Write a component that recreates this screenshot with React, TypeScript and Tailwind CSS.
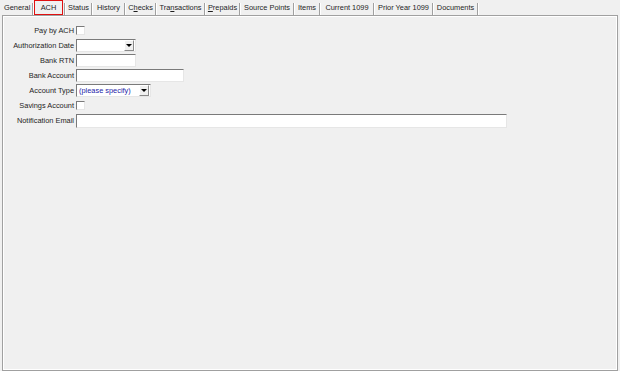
import { ReactNode } from "react";

type Tab = { label: ReactNode; cls: string; active?: boolean };

const tabs: Tab[] = [
	{ label: "General", cls: "w-[32px] justify-start pl-[4px]" },
	{ label: "ACH", cls: "w-[30px]", active: true },
	{ label: "Status", cls: "w-[25px] justify-center" },
	{ label: "History", cls: "w-[31px] justify-center" },
	{
		label: (
			<>
				C<span className="underline">h</span>ecks
			</>
		),
		cls: "w-[29px] justify-center",
	},
	{
		label: (
			<>
				Tra<span className="underline">n</span>sactions
			</>
		),
		cls: "w-[47px] justify-center",
	},
	{
		label: (
			<>
				<span className="underline">P</span>repaids
			</>
		),
		cls: "w-[33px] justify-center",
	},
	{ label: "Source Points", cls: "w-[52px] justify-center" },
	{ label: "Items", cls: "w-[24px] justify-center" },
	{ label: "Current 1099", cls: "w-[52px] justify-center" },
	{ label: "Prior Year 1099", cls: "w-[57px] justify-center" },
	{ label: "Documents", cls: "w-[43px] justify-center" },
];

const sunken =
	"border border-t-[#7a7a7a] border-l-[#7a7a7a] border-b-[#e6e6e6] border-r-[#e6e6e6] bg-white";

const Separator = () => (
	<div className="mt-[3px] h-[12px] w-[2px] border-l border-r border-l-[#a0a0a0] border-r-white" />
);

const Arrow = () => (
	<div className="flex h-[11px] w-[10px] items-center justify-center border border-t-white border-l-white border-b-[#8a8a8a] border-r-[#8a8a8a] bg-[#f0f0f0]">
		<div className="h-0 w-0 border-x-[3px] border-t-[3px] border-x-transparent border-t-black" />
	</div>
);

const Row = ({ label, children }: { label: string; children: ReactNode }) => (
	<div className="flex h-[15px] items-center">
		<div className="w-[71px] whitespace-nowrap text-right">{label}</div>
		<div className="ml-[2px] flex items-center">{children}</div>
	</div>
);

const Check = () => <div className={`h-[9px] w-[9px] ${sunken}`} />;

export default function App() {
	return (
		<div className="h-[371px] w-[620px] overflow-hidden bg-[#f0f0f0] font-['Liberation_Sans',Arial,sans-serif] text-[7.4px] leading-none text-[#1e1e1e]">
			<div className="flex h-[15px]">
				{tabs.map((t, i) => (
					<div key={i} className="flex">
						{t.active ? (
							<div className="w-[30px]">
								<div className="flex h-[15px] w-[29px] items-center justify-center border border-[#e01010]">
									{t.label}
								</div>
							</div>
						) : (
							<div className={`flex items-center whitespace-nowrap ${t.cls}`}>
								{t.label}
							</div>
						)}
						<Separator />
					</div>
				))}
			</div>

			<div className="ml-[2px] h-[356px] w-[616px] border border-[#a0a0a0] pt-[7px] shadow-[inset_1px_1px_0_#ffffff,inset_-1px_-1px_0_#ffffff]">
				<Row label="Pay by ACH">
					<Check />
				</Row>
				<Row label="Authorization Date">
					<div className={`flex h-[13px] w-[60px] items-center justify-end pr-[1px] ${sunken}`}>
						<Arrow />
					</div>
				</Row>
				<Row label="Bank RTN">
					<div className={`h-[13px] w-[60px] ${sunken}`} />
				</Row>
				<Row label="Bank Account">
					<div className={`h-[13px] w-[108px] ${sunken}`} />
				</Row>
				<Row label="Account Type">
					<div className={`flex h-[13px] w-[75px] items-center justify-between pl-[2px] pr-[1px] ${sunken}`}>
						<span className="whitespace-nowrap text-[#1c1ca8]">(please specify)</span>
						<Arrow />
					</div>
				</Row>
				<Row label="Savings Account">
					<Check />
				</Row>
				<Row label="Notification Email">
					<div className={`h-[14px] w-[431px] ${sunken}`} />
				</Row>
			</div>
		</div>
	);
}
